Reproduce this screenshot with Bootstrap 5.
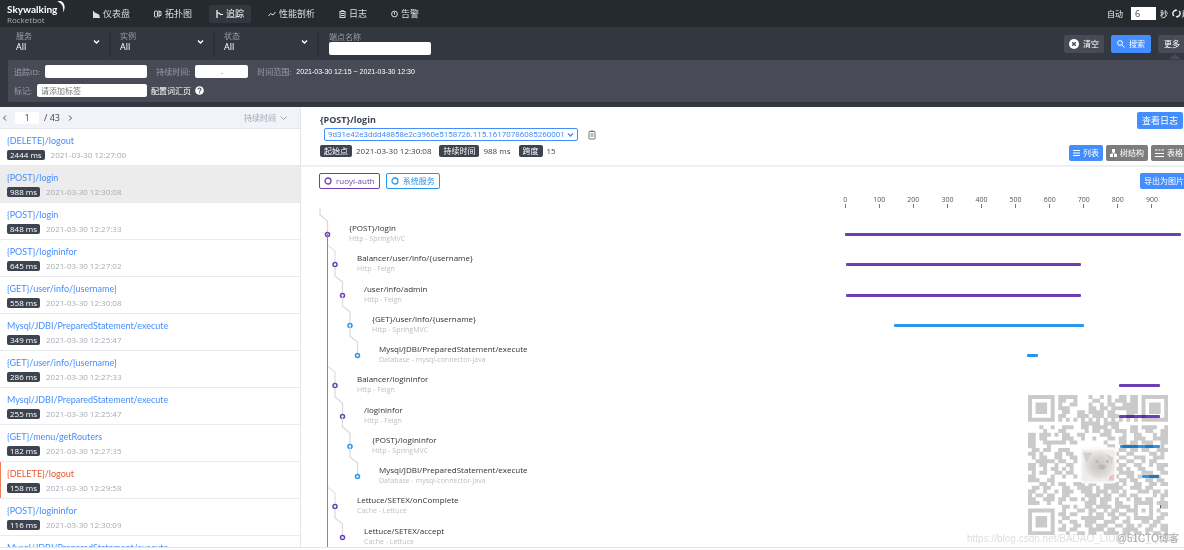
<!DOCTYPE html>
<html lang="zh-CN">
<head>
<meta charset="utf-8">
<meta name="viewport" content="width=device-width, initial-scale=1">
<title>Skywalking Rocketbot</title>
<link href="https://cdn.jsdelivr.net/npm/bootstrap@5.3.0/dist/css/bootstrap.min.css" rel="stylesheet">
<style>
  :root { --blue: #448dfe; --violet: #6c3fb4; --sky: #2a96e8; --panel: #484b56; --bar: #333840; }
  body { font: 8px/12px "Open Sans", "Noto Sans CJK SC", sans-serif; color: #3d444f; height: 100vh; overflow: hidden; }
  svg { flex: none; display: block; }
  input, select, button { font: inherit; }
  .topbar { background: #252a2f; height: 27px; padding-left: 7px; color: #efeff1; }
  .brand { width: 79px; color: #fff; text-decoration: none; }
  .brand-name { font: 700 10px/12px Lato, sans-serif; }
  .brand-moon { left: 50px; top: -3px; }
  .brand-sub { color: #a9adb5; line-height: 9px; }
  .topnav { gap: 10px; font-size: 9px; }
  .topnav a { color: #dcdde0; text-decoration: none; padding: 0 7px; height: 18px; gap: 3px; border-radius: 3px; }
  .topnav a.active { background: var(--bar); color: #fff; }
  .overhang { margin-right: -14px; white-space: nowrap; }
  .field { border: 0; border-radius: 2px; background: #fff; height: 13px; padding: 0 4px; color: #3d444f; min-width: 0; }
  .field::placeholder { color: #777; opacity: 1; }
  .w-id { width: 102px; } .w-tag { width: 110px; } .w-dur { width: 53px; } .w-sec { width: 25px; border-radius: 0; font-size: 9px; }
  .filters { background: var(--bar); height: 33px; padding-left: 7px; }
  .picker { width: 104px; height: 26px; padding: 0 9px 4px; border-right: 2px solid #2a2e35; color: #fff; }
  .muted { color: #9a9ea7; }
  .plain { appearance: none; border: 0; background: transparent; color: inherit; padding: 0; height: 11px; line-height: 11px; }
  .picker select { font-size: 9px; }
  .picker label, .endpoint label { line-height: 10px; display: block; }
  .endpoint { padding: 0 0 1px 10px; }
  .tool { border: 0; border-radius: 2px; color: #fff; background: var(--panel); height: 18px; padding: 0 6px; gap: 4px; line-height: 12px; display: inline-flex; align-items: center; justify-content: center; white-space: nowrap; }
  .tool.go { background: var(--blue); }
  .tool.gray { background: #7d7d7d; }
  .tool.short { height: 16px; padding: 0 4px; gap: 3px; }
  .tool.wide { font-size: 9px; height: 17px; padding: 0 5px; }
  .w-tool { width: 40px; position: relative; }
  .caret-up::after { content: ""; position: absolute; top: 19px; left: 11px; border: 6px solid transparent; border-top: 0; border-bottom: 5px solid var(--panel); }
  .advanced-wrap { background: var(--bar); padding: 0 0 5px 8px; }
  .advanced { background: var(--panel); padding: 5px 6px; gap: 6px; border-radius: 2px 0 0 2px; color: #fff; }
  .advanced .d-flex { height: 13px; }
  .advanced label, .advanced .muted { margin-right: 5px; }
  .advanced .gap-after { margin-right: 9px; }
  .range { font: 7px/12px "Liberation Sans", sans-serif; }
  .side { flex: 0 0 301px; border-right: 1px solid #e4e5e8; }
  .pager { background: #f2f3f9; height: 22px; border-bottom: 1px solid #e6e7ec; padding: 0 13px 0 2px; flex: none; font-size: 9px; }
  .pager input { width: 24px; height: 12px; text-align: center; margin: 0 5px 0 8px; }
  .pager button { color: #9da5b2; font-size: 8px; }
  .trace { height: 37px; flex: none; padding: 6px 7px 0; border-bottom: 1px solid #e9eaec; text-decoration: none; }
  .trace .name { color: var(--blue); display: block; font: 9px/12px Lato, sans-serif; }
  .trace .meta { margin-top: 2px; gap: 6px; }
  .trace .when { color: #a5abb5; }
  .trace.on { background: #ececec; }
  .trace.bad { box-shadow: inset 1px 0 #ee7d5a; }
  .trace.bad .name { color: #e8562f; }
  .chip { background: #3d444f; color: #fff; border-radius: 2px; padding: 0 3px; line-height: 10px; display: inline-block; }
  .chip.tall { line-height: 12px; padding: 0 4px; }
  .head { padding: 5px 1px 4px 19px; border-bottom: 2px solid #efeff1; height: 60px; flex: none; }
  .head h1 { font-size: 9px; line-height: 16px; font-weight: 700; margin: 0; }
  .modes { gap: 3px; margin-right: -4px; }
  .ids { border: 1px solid var(--blue); border-radius: 2px; color: var(--blue); height: 13px; width: 254px; padding: 0 3px; }
  .ids select { font-family: Roboto, sans-serif; }
  .legend-bar { padding: 6px 0 0 18px; }
  .legend-bar .tool { margin-right: -4px; }
  .legend-tag { border: 1px solid; border-radius: 2px; height: 16px; padding: 0 4px; gap: 4px; }
  .violet { color: var(--violet); } .sky { color: var(--sky); }
  .axis { margin: 6px 0 0 59.7%; width: 38.6%; display: grid; grid-template-columns: repeat(10, 1fr); text-align: center; font-size: 7px; line-height: 9px; color: #555; }
  .axis span::after { content: ""; display: block; width: 1px; height: 4px; margin: 0 auto; background: #777; }
  .spans { display: grid; grid-template-rows: repeat(11, minmax(30px, 1fr)); padding-top: 6px; background: linear-gradient(#8a8a8a, #8a8a8a) 26px 26px / 1px 100% no-repeat; }
  .span-row { min-height: 0; display: flex; }
  .span-left { flex: 0 0 61.6%; display: flex; min-width: 0; }
  .span-left svg { overflow: visible; }
  .span-left div { padding-top: 8px; line-height: 11px; color: #303036; white-space: nowrap; }
  .span-left .kind { color: #bfbfc4; font-size: 7px; line-height: 11px; display: block; }
  .track { flex: 1; padding-top: 19px; }
  .track i { display: block; height: 3px; border-radius: 1px; background: var(--c); }
  .wm { position: absolute; right: 16px; bottom: 15px; width: 140px; mix-blend-mode: multiply; }
  .wm-link, .wm-site { position: absolute; white-space: nowrap; bottom: 5px; font: 10px/12px "Liberation Sans", "Noto Sans CJK SC", sans-serif; }
  .wm-link { left: calc(100% - 217px); color: #dedede; }
  .wm-site { right: 5px; color: #a9a9a9; }
  .foot { height: 3px; border-top: 1px solid #e4e5e8; flex: none; background: #fff; }
  main, .detail { min-width: 0; min-height: 0; }
</style>
</head>
<body class="d-flex flex-column position-relative">
<header class="topbar d-flex align-items-center flex-shrink-0">
  <a class="brand position-relative" href="#">
    <div class="brand-name">Skywalking</div>
    <div class="brand-sub">Rocketbot</div>
    <svg class="brand-moon position-absolute" width="9" height="13" viewBox="0 0 9 13"><path d="M0 1.500C6-1 10 6 6 12.500C7 7 5 3 0 1.500Z" fill="#fff"/></svg>
  </a>
  <nav class="topnav d-flex">
    <a href="#" class="d-flex align-items-center"><svg width="7" height="8" viewBox="0 0 7 8" fill="currentColor"><path d="M0 1h1v6h6v1H0z"/><path d="M1 2l2 1 2 1 1.500 1v2H1z"/></svg>仪表盘</a>
    <a href="#" class="d-flex align-items-center"><svg width="8" height="8" viewBox="0 0 8 8" fill="none" stroke="currentColor"><rect x=".5" y="1" width="3" height="6" rx=".8"/><path d="M5 .500v7M5 1.500h2V5.500H5"/></svg>拓扑图</a>
    <a href="#" class="d-flex align-items-center active" aria-current="page"><svg width="7" height="8" viewBox="0 0 7 8" fill="none" stroke="currentColor" stroke-width="1.200"><path d="M1 0v8M1 3h2l1.500 1.500H7"/></svg>追踪</a>
    <a href="#" class="d-flex align-items-center"><svg width="8" height="8" viewBox="0 0 8 8" fill="none" stroke="currentColor"><path d="M.500 6L2.500 3.500 5 5 7.500 2"/></svg>性能剖析</a>
    <a href="#" class="d-flex align-items-center"><svg width="7" height="8" viewBox="0 0 7 8" fill="none" stroke="currentColor"><rect x="1" y="1.500" width="5" height="6"/><path d="M2 .800h3M2 3.500h3M2 5.500h3"/></svg>日志</a>
    <a href="#" class="d-flex align-items-center"><svg width="7" height="8" viewBox="0 0 7 8" fill="none" stroke="currentColor"><circle cx="3.500" cy="4" r="2.900"/><path d="M3.500 2.200v2.300"/></svg>告警</a>
  </nav>
  <div class="ms-auto overhang d-flex align-items-center">
    <label for="sec" class="me-2">自动</label><input id="sec" class="field w-sec" value="6"><span class="ms-1 me-1">秒</span>
    <button class="plain d-flex align-items-center"><svg width="10" height="9" viewBox="0 0 10 9" fill="none" stroke="currentColor" stroke-width="1.400"><path d="M2 7A3.300 3.300 0 0 1 4 1.200M7 2A3.300 3.300 0 0 1 5 7.800"/><path d="M3.500 0l2 1.200-2 1.300zM5.500 6.500l-2 1.300 2 1.200z" fill="currentColor" stroke="none"/></svg>刷新</button>
  </div>
</header>

<section class="filters d-flex align-items-center flex-shrink-0">
  <div class="picker d-flex align-items-center justify-content-between"><div><label class="muted" for="svc">服务</label><select class="plain d-block" id="svc"><option>All</option></select></div><svg width="7" height="6" viewBox="0 0 7 6" fill="none" stroke="#fff" stroke-width="1.400"><path d="M1 1.500l2.500 2.500L6 1.500"/></svg></div>
  <div class="picker d-flex align-items-center justify-content-between"><div><label class="muted" for="ins">实例</label><select class="plain d-block" id="ins"><option>All</option></select></div><svg width="7" height="6" viewBox="0 0 7 6" fill="none" stroke="#fff" stroke-width="1.400"><path d="M1 1.500l2.500 2.500L6 1.500"/></svg></div>
  <div class="picker d-flex align-items-center justify-content-between"><div><label class="muted" for="st">状态</label><select class="plain d-block" id="st"><option>All</option></select></div><svg width="7" height="6" viewBox="0 0 7 6" fill="none" stroke="#fff" stroke-width="1.400"><path d="M1 1.500l2.500 2.500L6 1.500"/></svg></div>
  <div class="endpoint"><label class="muted" for="ep">端点名称</label><input id="ep" class="field w-id d-block"></div>
  <div class="ms-auto overhang d-flex" style="gap:7px">
    <button class="tool w-tool"><svg width="10" height="10" viewBox="0 0 10 10"><circle cx="5" cy="5" r="5" fill="#fff"/><path d="M3.200 3.200l3.600 3.600M6.800 3.200L3.200 6.800" stroke="#484b56" stroke-width="1.400"/></svg>清空</button>
    <button class="tool go w-tool"><svg width="8" height="8" viewBox="0 0 8 8" fill="none" stroke="#fff"><circle cx="3" cy="3" r="2.400"/><path d="M5 5l2.600 2.600"/></svg>搜索</button>
    <button class="tool w-tool caret-up justify-content-start">更多</button>
  </div>
</section>

<section class="advanced-wrap flex-shrink-0">
  <div class="advanced d-flex flex-column">
    <div class="d-flex align-items-center">
      <label class="muted" for="tid">追踪ID:</label><input id="tid" class="field w-id gap-after">
      <label class="muted" for="dur">持续时间:</label><input id="dur" class="field w-dur text-center gap-after" placeholder="-">
      <span class="muted">时间范围:</span><span class="range">2021-03-30 12:15 ~ 2021-03-30 12:30</span>
    </div>
    <div class="d-flex align-items-center">
      <label class="muted" for="tag">标记:</label><input id="tag" class="field w-tag me-1" placeholder="请添加标签">
      <span class="me-1">配置词汇页</span>
      <svg width="9" height="9" viewBox="0 0 9 9"><circle cx="4.500" cy="4.500" r="4.300" fill="#fff"/><path d="M3 3.500C3 1.500 6 1.600 6 3.400C6 4.400 4.500 4.400 4.500 5.500M4.500 6.300v1" fill="none" stroke="#484b56" stroke-width="1.100"/></svg>
    </div>
  </div>
</section>

<main class="d-flex flex-fill overflow-hidden">
  <aside class="side d-flex flex-column overflow-hidden">
    <div class="pager d-flex align-items-center">
      <svg width="5" height="8" viewBox="0 0 5 8" fill="none" stroke="#555"><path d="M4 1.500L1.500 4 4 6.500"/></svg>
      <input class="field" value="1" aria-label="page"><span>/ 43</span>
      <svg class="ms-2" width="5" height="8" viewBox="0 0 5 8" fill="none" stroke="#555"><path d="M1 1.500L3.500 4 1 6.500"/></svg>
      <button class="plain ms-auto d-flex align-items-center gap-1">持续时间<svg width="7" height="6" viewBox="0 0 7 6" fill="none" stroke="currentColor"><path d="M.500 1.500l3 3 3-3"/></svg></button>
    </div>
    <div id="traces" class="d-flex flex-column"></div>
  </aside>

  <section class="detail flex-fill d-flex flex-column overflow-hidden">
    <div class="head d-flex justify-content-between">
      <div>
        <h1>{POST}/login</h1>
        <div class="d-flex align-items-center ms-1 mb-1">
          <div class="ids d-flex align-items-center justify-content-between"><select class="plain" aria-label="trace id"><option>9d31e42e3ddd48858e2c3960e5158726.115.16170786085260001</option></select><svg width="7" height="6" viewBox="0 0 7 6" fill="none" stroke="currentColor" stroke-width="1.300"><path d="M1 1.500l2.500 2.500L6 1.500"/></svg></div>
          <svg class="ms-2" width="12" height="10" viewBox="0 0 12 10" fill="none" stroke="#777"><rect x="3" y="1.500" width="6" height="7.500" rx=".5"/><path d="M4.500 1h3M4.500 4h3M4.500 6h3"/></svg>
        </div>
        <div class="d-flex align-items-center">
          <span class="chip tall me-1">起始点</span><span class="me-2">2021-03-30 12:30:08</span>
          <span class="chip tall me-1">持续时间</span><span class="me-2">988 ms</span>
          <span class="chip tall me-1">跨度</span><span>15</span>
        </div>
      </div>
      <div class="d-flex flex-column align-items-end justify-content-between text-nowrap">
        <button class="tool go wide">查看日志</button>
        <div class="modes d-flex">
          <button class="tool go short"><svg width="7" height="8" viewBox="0 0 7 8" stroke="#fff"><path d="M0 1.500h7M0 4h7M0 6.500h7"/></svg>列表</button>
          <button class="tool gray short"><svg width="7" height="8" viewBox="0 0 7 8" fill="#fff"><path d="M2 0h3v3H2zM0 5h3v3H0zM4 5h3v3H4zM3 3h1l2 2H5L3.500 4 2 5H1z"/></svg>树结构</button>
          <button class="tool gray short"><svg width="9" height="8" viewBox="0 0 9 8" stroke="#fff"><path d="M0 1h2.500M3.500 1h2M6.500 1H9M0 4.500h9M0 7.500h9"/></svg>表格</button>
        </div>
      </div>
    </div>
    <div class="legend-bar d-flex align-items-start justify-content-between flex-shrink-0">
      <div class="d-flex" style="gap:6px">
        <span class="legend-tag violet d-flex align-items-center"><svg width="8" height="8" viewBox="0 0 8 8" fill="none" stroke="currentColor" stroke-width="1.300"><circle cx="4" cy="4" r="3"/></svg>ruoyi-auth</span>
        <span class="legend-tag sky d-flex align-items-center"><svg width="8" height="8" viewBox="0 0 8 8" fill="none" stroke="currentColor" stroke-width="1.300"><circle cx="4" cy="4" r="3"/></svg>系统服务</span>
      </div>
      <button class="tool go short">导出为图片</button>
    </div>
    <div class="axis flex-shrink-0" id="axis"></div>
    <div class="spans flex-fill" id="spans"></div>
  </section>
</main>
<div class="foot"></div>

<svg class="wm" viewBox="0 0 37 37" aria-hidden="true">
  <defs><radialGradient id="fur"><stop offset="0" stop-color="#c6c3c0"/><stop offset=".6" stop-color="#d8d5d3"/><stop offset="1" stop-color="#ebe9e7"/></radialGradient></defs>
  <path id="qr" fill="#cacaca"/>
  <rect x="13.800" y="13.800" width="9.600" height="9.600" rx="1" fill="#fafafa"/><rect x="14.300" y="14.500" width="8.600" height="8.400" rx=".6" fill="#f0eeed"/><ellipse cx="18.800" cy="18.600" rx="4" ry="3.800" fill="url(#fur)"/><path d="M14.500 15.200h2.500l-1.600 2.800zM20.500 15.500l2 1-.3 2z" fill="#d2cfcd"/><circle cx="18.200" cy="17.600" r=".4" fill="#bbb7b5"/><circle cx="21" cy="17.600" r=".4" fill="#bbb7b5"/><ellipse cx="19.600" cy="19" rx=".9" ry=".6" fill="#bbb7b5"/><path d="M21.300 22.600q0-1.700 1.400-1.600v1.600z" fill="#efc0c5"/>
</svg>
<span class="wm-link">https://blog.csdn.net/BADAO_LIUMANG_QIZHI</span>
<span class="wm-site">@51CTO博客</span>

<script src="https://cdn.jsdelivr.net/npm/bootstrap@5.3.0/dist/js/bootstrap.bundle.min.js"></script>
<script>
const traces = [
  ["{DELETE}/logout", 2444, "12:27:00"], ["{POST}/login", 988, "12:30:08", "on"], ["{POST}/login", 848, "12:27:33"],
  ["{POST}/logininfor", 645, "12:27:02"], ["{GET}/user/info/{username}", 558, "12:30:08"],
  ["Mysql/JDBI/PreparedStatement/execute", 349, "12:25:47"], ["{GET}/user/info/{username}", 286, "12:27:33"],
  ["Mysql/JDBI/PreparedStatement/execute", 255, "12:25:47"], ["{GET}/menu/getRouters", 182, "12:27:35"],
  ["{DELETE}/logout", 158, "12:29:58", "bad"], ["{POST}/logininfor", 116, "12:30:09"],
  ["Mysql/JDBI/PreparedStatement/execute", 103, "12:25:47"]];
document.getElementById("traces").innerHTML = traces.map(([n, ms, t, c = ""]) =>
  `<a href="#" class="trace ${c}"><span class="name">${n}</span><span class="meta d-flex align-items-center"><span class="chip">${ms} ms</span><span class="when">2021-03-30 ${t}</span></span></a>`).join("");

const V = "var(--violet)", S = "var(--sky)";
// name, kind, depth, colour, start ms, end ms
const spans = [
  ["{POST}/login", "Http - SpringMVC", 0, V, 0, 990],
  ["Balancer/user/info/{username}", "Http - Feign", 1, V, 3, 696],
  ["/user/info/admin", "Http - Feign", 2, V, 3, 696],
  ["{GET}/user/info/{username}", "Http - SpringMVC", 3, S, 145, 704],
  ["Mysql/JDBI/PreparedStatement/execute", "Database - mysql-connector-java", 4, S, 538, 569],
  ["Balancer/logininfor", "Http - Feign", 1, V, 808, 928],
  ["/logininfor", "Http - Feign", 2, V, 808, 928],
  ["{POST}/logininfor", "Http - SpringMVC", 3, S, 812, 928],
  ["Mysql/JDBI/PreparedStatement/execute", "Database - mysql-connector-java", 4, S, 875, 926],
  ["Lettuce/SETEX/onComplete", "Cache - Lettuce", 1, V, 928, 930],
  ["Lettuce/SETEX/accept", "Cache - Lettuce", 2, V, 929, 930]];
document.getElementById("spans").innerHTML = spans.map(([n, k, d, c, a, b], i) => {
  const x = 26.5 + d * 7.5, w = Math.round(48 + d * 7.5);
  return `<div class="span-row"><div class="span-left"><svg width="${w}" height="30" fill="none">
    <path d="M${x - 7.5} ${i ? -8 : -6}V1L${x} 7V20" stroke="#d9d9dc" stroke-width="${d === 1 ? 1 : 1.2}"/>
    ${d === 1 ? '<path d="M26.500 -10V2" stroke="#8a8a8a"/>' : ""}
    <circle cx="${x}" cy="20.500" r="2" fill="#fff" stroke="${c}" stroke-width="1.500"/></svg>
    <div>${n}<span class="kind">${k}</span></div></div>
    <div class="track"><i style="--c:${c};margin-left:${a / 10}%;width:${(b - a) / 10}%"></i></div></div>`;
}).join("");
document.getElementById("axis").innerHTML = [...Array(10).keys()].map(i => `<span>${i * 100}</span>`).join("");

const rows = [
  "1111111.11111...1..1.1..11.11.1111111",
  "1.....1.11..1....11..1.111.11.1.....1",
  "1.111.1.1..11...1..1.11..1111.1.111.1",
  "1.111.1.111.....11.11.1111111.1.111.1",
  "1.111.1..11..11.1111.11...111.1.111.1",
  "1.....1.11...111.111.111..11..1.....1",
  "1111111.1.1.1.1.1.1.1.1.1.1.1.1111111",
  "..............11111.1111.............",
  "...1..1..111..11.1111.11...11.1111..1",
  "....1...11.....1.11.11.111.11..11..11",
  "11.111.1.11..11....111...1..11...1.11",
  "11.11....111..1..1...11.11..111..1111",
  "11..111111.11.......1...11.11.111..11",
  "11...1...............11..1111..11..1.",
  ".11.11..111..........11.11.11.11..111",
  "11.1...11.11...........1..11....11.1.",
  ".1.11..11..11...........11..111..111.",
  "..11111.11..1..........1..11..1.11...",
  "11.11..1..11............11..11..1.111",
  "11..1.11.1.1...........11.1..11...11.",
  ".1.11..11.11............1111..111..11",
  "11....1..1..1..........1..11.1..111..",
  "111..11.................11.11..11.11.",
  "...11.1.11..111.11..1111.1..11..11.11",
  ".11.11...11..1111.1.11111..111.11....",
  "11..1..1.111..111.111.11.1...111.11.1",
  "1.11.11..11....1111.11..11.11....1.11",
  "11..111.11.11.1.11.111.1..1.11.11..1.",
  "111..1..1......111.11..11...11111.111",
  ".........11.1..11.1111.1111.1...1..11",
  "1111111..1...11.11..1.11..111.1.1.1..",
  "1.....1.11.11...1.11.11.11..1...1..11",
  "1.111.1..11...111111..11..1.11111.11.",
  "1.111.1.1..11..111..111..11...11.11..",
  "1.111.1..1..11.11.111..11.11.1..11.11",
  "1.....1.11.11...1111.11..1111..11..11",
  "1111111...1..11.11..1111.11.11.1.11.1"];
document.getElementById("qr").setAttribute("d", rows.map((r, y) =>
  [...r].map((c, x) => c === "1" ? `M${x} ${y}h1.050v1.050h-1.050z` : "").join("")).join(""));
</script>
</body>
</html>
